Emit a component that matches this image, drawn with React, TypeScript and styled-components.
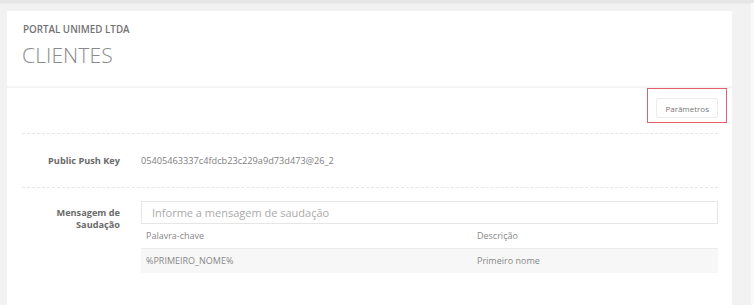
import React from "react";
import styled, { createGlobalStyle } from "styled-components";

const GlobalStyle = createGlobalStyle`
  html, body {
    margin: 0;
    padding: 0;
    background: #f2f2f2;
    font-family: "Open Sans", "Liberation Sans", sans-serif;
  }
`;

const keywords = [{ key: "%PRIMEIRO_NOME%", desc: "Primeiro nome" }];

const App = () => {
  return (
    <>
      <GlobalStyle />
      <TopBar />
      <Page>
        <Main>
          <Header>
            <Company>Portal Unimed Ltda</Company>
            <Title>CLIENTES</Title>
          </Header>
          <Body>
            <Toolbar>
              <Highlight>
                <Button>Parâmetros</Button>
              </Highlight>
            </Toolbar>
            <FieldRow>
              <Label>Public Push Key</Label>
              <Value>05405463337c4fdcb23c229a9d73d473@26_2</Value>
            </FieldRow>
            <FieldRow $top>
              <Label $top>
                Mensagem de
                <br />
                Saudação
              </Label>
              <div>
                <Input placeholder="Informe a mensagem de saudação" />
                <Table>
                  <HeadCell>Palavra-chave</HeadCell>
                  <HeadCell>Descrição</HeadCell>
                  {keywords.map((k) => (
                    <React.Fragment key={k.key}>
                      <Cell>{k.key}</Cell>
                      <Cell>{k.desc}</Cell>
                    </React.Fragment>
                  ))}
                </Table>
              </div>
            </FieldRow>
          </Body>
        </Main>
        <Track />
      </Page>
    </>
  );
};

export default App;

const TopBar = styled.div`
  height: 3px;
  background: #e6e6e6;
  box-shadow: 0 1px 2px rgba(0, 0, 0, 0.04);
`;

const Page = styled.div`
  display: flex;
  height: 302px;
`;

const Main = styled.div`
  flex: 1;
  margin: 8px 19px 0 7px;
  background: #fff;
  display: flex;
  flex-direction: column;
`;

const Track = styled.div`
  width: 3px;
  background: #fafafa;
`;

const Header = styled.div`
  height: 77px;
  padding: 12px 0 0 16px;
  box-sizing: border-box;
  border-bottom: 2px solid #f4f4f4;
`;

const Company = styled.div`
  font-size: 9.8px;
  font-weight: 600;
  color: #727272;
  text-transform: uppercase;
  line-height: 14px;
`;

const Title = styled.h1`
  margin: 5px 0 0 -1px;
  font-size: 21px;
  font-weight: 300;
  color: #8a8a8a;
  line-height: 26px;
  letter-spacing: 0.1px;
`;

const Body = styled.div`
  flex: 1;
  padding: 0 14px 0 15px;
`;

const Toolbar = styled.div`
  display: flex;
  justify-content: flex-end;
  padding-bottom: 10px;
  border-bottom: 1px dashed #e6e6e6;
`;

const Highlight = styled.div`
  border: 1px solid #e4606d;
  padding: 9px 8px 4px 8px;
  margin-right: -9px;
`;

const Button = styled.button`
  display: block;
  height: 20px;
  padding: 0 8px;
  font-family: inherit;
  font-size: 8px;
  color: #777;
  background: #fff;
  border: 1px solid #ececec;
  border-radius: 2px;
  cursor: pointer;
`;

const FieldRow = styled.div<{ $top?: boolean }>`
  display: grid;
  grid-template-columns: 98px 1fr;
  column-gap: 21px;
  align-items: ${(p) => (p.$top ? "start" : "center")};
  padding: ${(p) => (p.$top ? "13px 0 0" : "0")};
  min-height: ${(p) => (p.$top ? "auto" : "53px")};
  border-bottom: ${(p) => (p.$top ? "none" : "1px dashed #e6e6e6")};
`;

const Label = styled.div<{ $top?: boolean }>`
  text-align: right;
  font-size: 9.2px;
  font-weight: 700;
  color: #6a6a6a;
  line-height: 12px;
  padding-top: ${(p) => (p.$top ? "6px" : "0")};
`;

const Value = styled.div`
  font-size: 9.2px;
  color: #808080;
`;

const Input = styled.input`
  display: block;
  width: 100%;
  box-sizing: border-box;
  height: 23px;
  padding: 0 10px;
  border: 1px solid #e6e6e6;
  font-family: inherit;
  font-size: 11px;
  color: #555;
  outline: none;
  &::placeholder {
    color: #aaa;
  }
`;

const Table = styled.div`
  display: grid;
  grid-template-columns: 331px 1fr;
`;

const HeadCell = styled.div`
  height: 24px;
  line-height: 24px;
  padding-left: 5px;
  font-size: 9px;
  color: #888;
  border-bottom: 1px solid #ececec;
`;

const Cell = styled.div`
  height: 24px;
  line-height: 24px;
  padding-left: 5px;
  font-size: 9px;
  color: #888;
  background: #f7f7f7;
`;
